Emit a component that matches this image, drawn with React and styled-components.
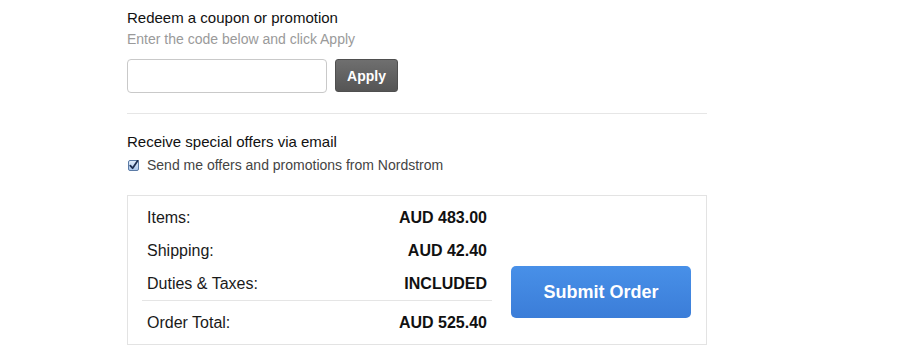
import React from 'react';
import styled, { createGlobalStyle } from 'styled-components';

const GlobalStyle = createGlobalStyle`
  body {
    margin: 0;
    background: #fff;
    font-family: "Liberation Sans", Arial, sans-serif;
    color: #111;
  }
`;

const Page = styled.div`
  width: 580px;
  margin-left: 127px;
`;

const CouponSection = styled.section`
  padding-top: 9px;
  padding-bottom: 20px;
  border-bottom: 1px solid #e6e6e6;
`;

const Heading = styled.div`
  font-size: 15px;
  line-height: 18px;
  color: #111;
`;

const Hint = styled.div`
  margin-top: 3px;
  font-size: 14px;
  line-height: 18px;
  color: #9a9a9a;
`;

const CouponForm = styled.form`
  display: flex;
  align-items: flex-start;
  gap: 8px;
  margin-top: 11px;
`;

const CodeInput = styled.input`
  box-sizing: border-box;
  width: 200px;
  height: 34px;
  padding: 0 8px;
  border: 1px solid #c9c9c9;
  border-radius: 4px;
  font-family: inherit;
  font-size: 14px;

  &:focus {
    outline: none;
  }
`;

const ApplyButton = styled.button`
  box-sizing: border-box;
  width: 63px;
  height: 33px;
  border: 1px solid #4f4f4f;
  border-radius: 3px;
  background: linear-gradient(#6f6f6f, #555);
  color: #fff;
  font-family: inherit;
  font-size: 14px;
  font-weight: bold;
  cursor: pointer;
`;

const OffersSection = styled.section`
  padding-top: 19px;
`;

const CheckRow = styled.label`
  display: flex;
  align-items: center;
  margin-top: 5px;
  height: 18px;
  font-size: 14px;
  color: #444;
`;

const CheckBox = styled.span`
  display: inline-flex;
  margin: 0 8px 0 1px;
  width: 11px;
  height: 11px;
`;

const SummaryBox = styled.div`
  display: flex;
  align-items: flex-end;
  margin-top: 21px;
  border: 1px solid #e3e3e3;
`;

const Summary = styled.div`
  width: 350px;
  margin-left: 14px;
  padding: 5px 0;
`;

const Row = styled.div`
  display: flex;
  justify-content: space-between;
  align-items: center;
  height: 33px;
  padding: 0 5px;
  font-size: 16px;
  color: #1a1a1a;
  border-top: ${({ $total }) => ($total ? '1px solid #e5e5e5' : 'none')};
  padding-top: ${({ $total }) => ($total ? '5px' : '0')};
`;

const Value = styled.span`
  font-weight: bold;
  color: #111;
`;

const SubmitButton = styled.button`
  width: 180px;
  height: 52px;
  margin: 0 0 26px 19px;
  border: none;
  border-radius: 5px;
  background: linear-gradient(#4890e8, #3b7dd8);
  color: #fff;
  font-family: inherit;
  font-size: 18px;
  font-weight: bold;
  cursor: pointer;
`;

const rows = [
  { label: 'Items:', value: 'AUD 483.00' },
  { label: 'Shipping:', value: 'AUD 42.40' },
  { label: 'Duties & Taxes:', value: 'INCLUDED' },
];

const Check = () => (
  <CheckBox>
    <svg width="11" height="11" viewBox="0 0 11 11">
      <defs>
        <linearGradient id="cb" x1="0" y1="0" x2="0" y2="1">
          <stop offset="0" stopColor="#e3eefb" />
          <stop offset="1" stopColor="#a9c6ec" />
        </linearGradient>
      </defs>
      <rect x="0.5" y="0.5" width="10" height="10" rx="1.5" fill="url(#cb)" stroke="#5b7ba6" />
      <path d="M2.3 5.6 L4.6 8.2 L9.8 0.6" fill="none" stroke="#1d2f52" strokeWidth="1.8" strokeLinecap="round" strokeLinejoin="round" />
    </svg>
  </CheckBox>
);

const App = () => (
  <>
    <GlobalStyle />
    <Page>
      <CouponSection>
        <Heading>Redeem a coupon or promotion</Heading>
        <Hint>Enter the code below and click Apply</Hint>
        <CouponForm onSubmit={(e) => e.preventDefault()}>
          <CodeInput type="text" name="coupon" />
          <ApplyButton type="submit">Apply</ApplyButton>
        </CouponForm>
      </CouponSection>

      <OffersSection>
        <Heading>Receive special offers via email</Heading>
        <CheckRow>
          <Check />
          Send me offers and promotions from Nordstrom
        </CheckRow>
      </OffersSection>

      <SummaryBox>
        <Summary>
          {rows.map((r) => (
            <Row key={r.label}>
              <span>{r.label}</span>
              <Value>{r.value}</Value>
            </Row>
          ))}
          <Row $total>
            <span>Order Total:</span>
            <Value>AUD 525.40</Value>
          </Row>
        </Summary>
        <SubmitButton type="button">Submit Order</SubmitButton>
      </SummaryBox>
    </Page>
  </>
);

export default App;
